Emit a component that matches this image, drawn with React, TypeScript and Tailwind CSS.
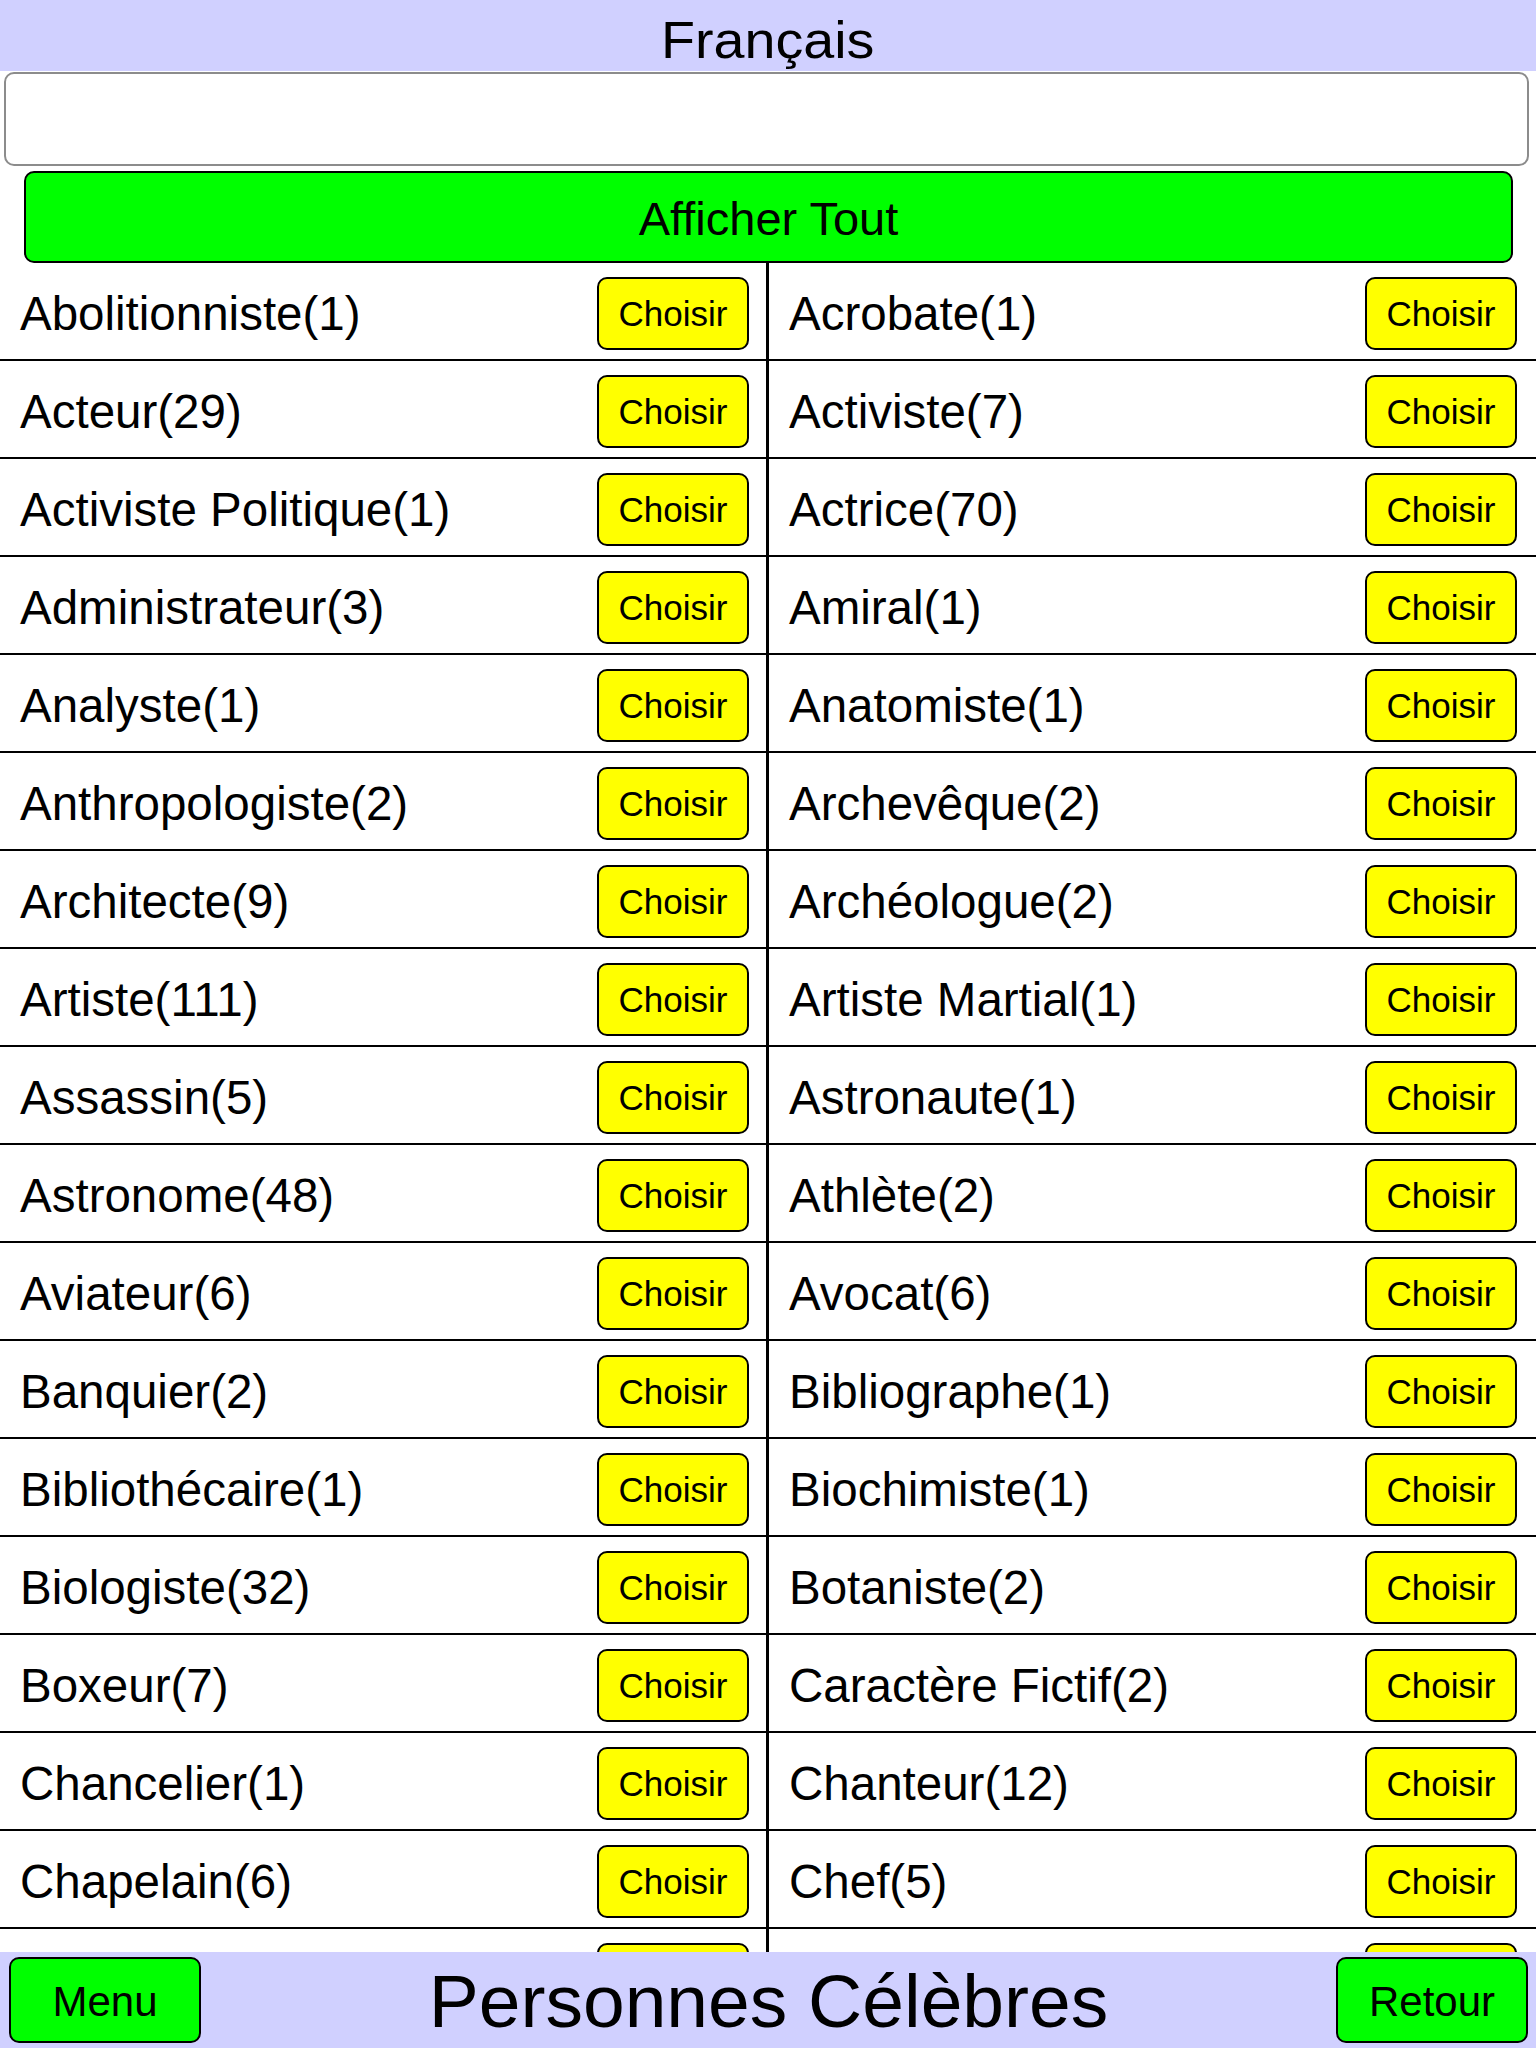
import React from "react";

const rows: [string, string][] = [
  ["Abolitionniste(1)", "Acrobate(1)"],
  ["Acteur(29)", "Activiste(7)"],
  ["Activiste Politique(1)", "Actrice(70)"],
  ["Administrateur(3)", "Amiral(1)"],
  ["Analyste(1)", "Anatomiste(1)"],
  ["Anthropologiste(2)", "Archevêque(2)"],
  ["Architecte(9)", "Archéologue(2)"],
  ["Artiste(111)", "Artiste Martial(1)"],
  ["Assassin(5)", "Astronaute(1)"],
  ["Astronome(48)", "Athlète(2)"],
  ["Aviateur(6)", "Avocat(6)"],
  ["Banquier(2)", "Bibliographe(1)"],
  ["Bibliothécaire(1)", "Biochimiste(1)"],
  ["Biologiste(32)", "Botaniste(2)"],
  ["Boxeur(7)", "Caractère Fictif(2)"],
  ["Chancelier(1)", "Chanteur(12)"],
  ["Chapelain(6)", "Chef(5)"],
  ["Chimiste(25)", "Chirurgien(4)"],
];

function ChooseButton() {
  return (
    <button className="w-[152px] h-[73px] shrink-0 bg-[#ffff00] border-2 border-black rounded-[10px] text-[35px] leading-none text-black flex items-center justify-center">
      Choisir
    </button>
  );
}

export default function App() {
  return (
    <div
      className="w-[1536px] h-[2048px] flex flex-col overflow-hidden bg-white text-black"
      style={{ fontFamily: '"Liberation Sans", Arial, Helvetica, sans-serif' }}
    >
      <div className="h-[71px] shrink-0 bg-[#d0d0ff] flex items-center justify-center pt-[8px]">
        <span className="inline-block text-[52px] leading-none scale-x-[1.07]">Français</span>
      </div>
      <div className="ml-[4px] mt-[1px] w-[1525px] h-[94px] shrink-0 border-2 border-[#8c8c8c] rounded-[10px] bg-white" />
      <button className="ml-[24px] mt-[5px] w-[1489px] h-[92px] shrink-0 bg-[#00ff00] border-2 border-black rounded-[10px] text-[47px] leading-none flex items-center justify-center pt-[2px]">
        Afficher Tout
      </button>
      <div className="flex-1 overflow-hidden">
        {rows.map(([l, r], i) => (
          <div key={i} className="flex h-[98px] border-b-2 border-black">
            <div className="w-[769px] border-r-[3px] border-black flex items-center justify-between pl-[20px] pr-[17px] pt-[5px]">
              <span className="text-[47.5px] leading-none whitespace-nowrap">{l}</span>
              <ChooseButton />
            </div>
            <div className="flex-1 flex items-center justify-between pl-[20px] pr-[19px] pt-[5px]">
              <span className="text-[47.5px] leading-none whitespace-nowrap">{r}</span>
              <ChooseButton />
            </div>
          </div>
        ))}
      </div>
      <div className="h-[96px] shrink-0 bg-[#d0d0ff] flex items-center pl-[9px] pr-[8px]">
        <button className="w-[192px] h-[86px] bg-[#00ff00] border-2 border-black rounded-[10px] text-[42px] leading-none flex items-center justify-center pt-[3px]">
          Menu
        </button>
        <div className="flex-1 text-center text-[75px] leading-none pt-[3px]">Personnes Célèbres</div>
        <button className="w-[192px] h-[86px] bg-[#00ff00] border-2 border-black rounded-[10px] text-[42px] leading-none flex items-center justify-center pt-[3px]">
          Retour
        </button>
      </div>
    </div>
  );
}
